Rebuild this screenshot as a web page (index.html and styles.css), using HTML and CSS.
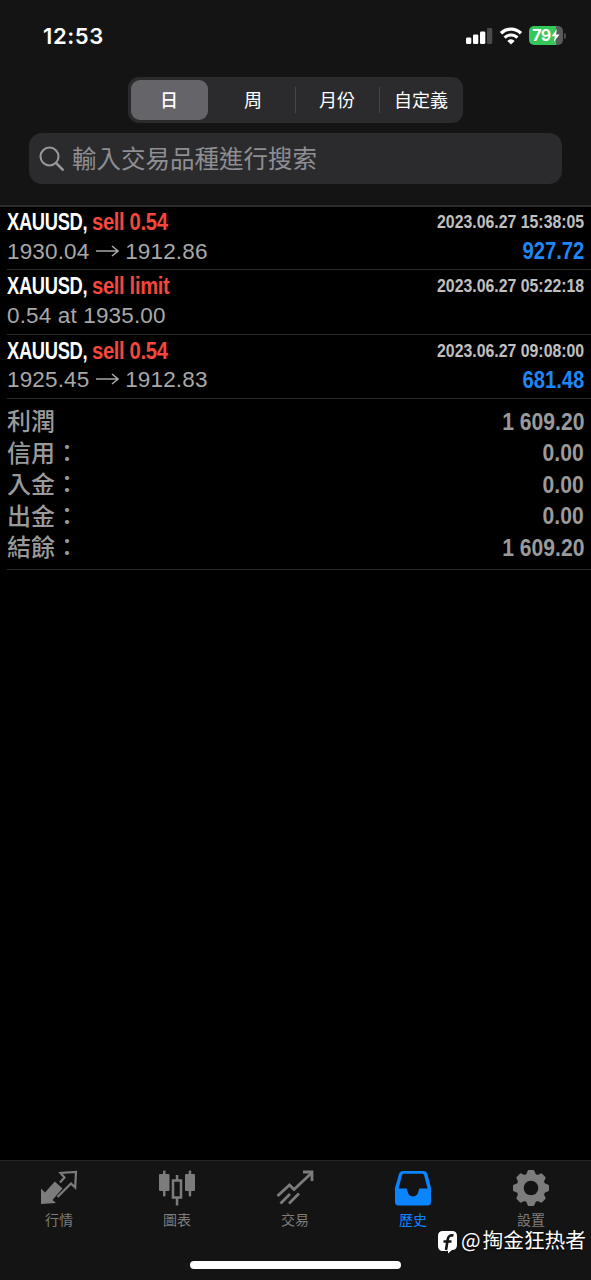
FILE: index.html
```
<!DOCTYPE html>
<html lang="zh-Hant">
<head>
    <meta charset="UTF-8">
    <meta name="viewport" content="width=device-width, initial-scale=1.0">
    <title>歷史</title>
    <link rel="stylesheet" href="styles.css">
</head>
<body>
    <header>
        <div class="status-bar">
            <span class="clock">12:53</span>
            <div class="status-icons">
                <svg class="signal" width="27" height="18" viewBox="0 0 27 18">
                    <rect x="0" y="10.5" width="5.3" height="6.5" rx="1.3" fill="#fff"/>
                    <rect x="7" y="7.5" width="5.3" height="9.5" rx="1.3" fill="#fff"/>
                    <rect x="14" y="4.5" width="5.3" height="12.5" rx="1.3" fill="#fff"/>
                    <rect x="21" y="1" width="5.3" height="16" rx="1.3" fill="#4a4a4a"/>
                </svg>
                <svg class="wifi" width="24" height="18" viewBox="0 0 24 18">
                    <path d="M2 6.300a14 14 0 0 1 20 0" fill="none" stroke="#fff" stroke-width="3.400"/>
                    <path d="M5.600 10.600a9 9 0 0 1 12.800 0" fill="none" stroke="#fff" stroke-width="3"/>
                    <path d="M8.300 13.900a5.200 5.200 0 0 1 7.400 0L12 17.500z" fill="#fff"/>
                </svg>
                <div class="battery">
                    <span>79</span>
                    <svg width="9" height="13" viewBox="0 0 9 13"><path d="M6 0L0.500 7.300h3.300L2.800 13 8.600 5.400H5z" fill="#fff"/></svg>
                </div>
                <i class="battery-cap"></i>
            </div>
        </div>
        <nav class="segments">
            <a class="active">日</a>
            <a>周</a>
            <a>月份</a>
            <a>自定義</a>
        </nav>
        <div class="search">
            <svg width="26" height="26" viewBox="0 0 26 26" fill="none" stroke="#98989d" stroke-width="2.1" stroke-linecap="round">
                <circle cx="10.5" cy="10.5" r="9"/>
                <path d="M17.200 17.200l6.500 6.500" stroke-width="2.600"/>
            </svg>
            <span>輸入交易品種進行搜索</span>
        </div>
    </header>

    <main>
        <ul class="deals">
            <li>
                <div class="line">
                    <b class="symbol"><span>XAUUSD,</span> <em>sell 0.54</em></b>
                    <time>2023.06.27 15:38:05</time>
                </div>
                <div class="line">
                    <span class="price">1930.04 <svg class="arrow" width="23" height="12" viewBox="0 0 23 12"><path d="M0 6h22M16 1l6 5-6 5"/></svg> 1912.86</span>
                    <b class="profit">927.72</b>
                </div>
            </li>
            <li>
                <div class="line">
                    <b class="symbol"><span>XAUUSD,</span> <em>sell limit</em></b>
                    <time>2023.06.27 05:22:18</time>
                </div>
                <div class="line">
                    <span class="price">0.54 at 1935.00</span>
                </div>
            </li>
            <li>
                <div class="line">
                    <b class="symbol"><span>XAUUSD,</span> <em>sell 0.54</em></b>
                    <time>2023.06.27 09:08:00</time>
                </div>
                <div class="line">
                    <span class="price">1925.45 <svg class="arrow" width="23" height="12" viewBox="0 0 23 12"><path d="M0 6h22M16 1l6 5-6 5"/></svg> 1912.83</span>
                    <b class="profit">681.48</b>
                </div>
            </li>
        </ul>
        <dl class="summary">
            <div><dt>利潤</dt><dd>1 609.20</dd></div>
            <div><dt>信用：</dt><dd>0.00</dd></div>
            <div><dt>入金：</dt><dd>0.00</dd></div>
            <div><dt>出金：</dt><dd>0.00</dd></div>
            <div><dt>結餘：</dt><dd>1 609.20</dd></div>
        </dl>
    </main>

    <footer>
        <nav class="tabs">
            <a>
                <svg width="38" height="38" viewBox="0 0 38 38">
                    <path d="M1 19.500l4 4L14.800 12.500l7.700 7L12.500 31l3.500 3-15 1z" fill="currentColor"/>
                    <path d="M20 13.500l4.500-5-4-4.500L36 3l-.8 15.500-4.200-4-13.500 13.500" fill="none" stroke="currentColor" stroke-width="2.200"/>
                </svg>
                <span>行情</span>
            </a>
            <a>
                <svg width="38" height="38" viewBox="0 0 38 38" fill="currentColor">
                    <rect x="1" y="5" width="10.5" height="17" rx="1"/>
                    <rect x="5" y="1.5" width="2.5" height="26" rx="1"/>
                    <rect x="27" y="5" width="10" height="17" rx="1"/>
                    <rect x="30.7" y="1.5" width="2.5" height="26" rx="1"/>
                    <rect x="15" y="11.5" width="8" height="17" fill="none" stroke="currentColor" stroke-width="2.5"/>
                    <rect x="17.8" y="6" width="2.5" height="5"/>
                    <rect x="17.8" y="29" width="2.5" height="7.5"/>
                </svg>
                <span>圖表</span>
            </a>
            <a>
                <svg width="38" height="38" viewBox="0 0 38 38" fill="none" stroke="currentColor" stroke-width="2.8">
                    <path d="M1.500 27l12-11 4.500 4.500L35.500 4"/>
                    <path d="M27 3h9v9"/>
                    <path d="M4.500 34.500l9.500-9.500M13 34.500l10-10"/>
                </svg>
                <span>交易</span>
            </a>
            <a class="active">
                <svg width="38" height="38" viewBox="0 0 38 38">
                    <path fill-rule="evenodd" fill="currentColor" d="M9 2h20.500q3 0 4 3L37 19v14q0 3.500-3.500 3.500h-29Q1 36.500 1 33V19L5 5q1-3 4-3zM9.800 4.800q-1.500 0-2 1.700L4.700 19.500h7.500q1 0 1 1.500 1 6.500 5.800 6.500t5.800-6.500q0-1.500 1-1.500h7.800L30.200 6.500q-.5-1.700-2-1.700z"/>
                </svg>
                <span>歷史</span>
            </a>
            <a>
                <svg width="38" height="38" viewBox="-19 -19 38 38">
                    <g fill="currentColor">
                        <g id="teeth">
                            <path id="tooth" d="M-5-13L-3.300-17.200q.3-.8 1-.8h4.600q.7 0 1 .8L5-13V13L3.300 17.200q-.3.8-1 .8h-4.600q-.7 0-1-.8L-5 13z"/>
                            <use href="#tooth" transform="rotate(90)"/>
                        </g>
                        <use href="#teeth" transform="rotate(45)"/>
                        <circle r="14.5"/>
                    </g>
                    <circle r="7.3" fill="#141414"/>
                </svg>
                <span>設置</span>
            </a>
        </nav>
        <div class="home-indicator"></div>
        <div class="watermark">
            <svg width="21" height="24" viewBox="0 0 21 24">
                <path d="M6 1h9q5 0 5 5v9q0 5-5 5l-4 3.500V21H6q-5 0-5-5V6q0-5 5-5z" fill="#fff"/>
                <path d="M16.500 5.500q-5-1-5.800 4L9 20M6.500 11.500h8" fill="none" stroke="#141414" stroke-width="2.600"/>
            </svg>
            <span>@</span><span>掏金狂热者</span>
        </div>
    </footer>
</body>
</html>
```
FILE: styles.css
```
* {
    box-sizing: border-box;
}
body {
    font-family: "Liberation Sans", "Noto Sans CJK TC", sans-serif;
    margin: 0;
    height: 1280px;
    display: flex;
    flex-direction: column;
    background-color: #000;
    color: #fff;
}
header {
    height: 207px;
    background-color: #141414;
    border-bottom: 2px solid #2c2c2c;
}
.status-bar {
    height: 77px;
    padding: 22px 25px 0 43px;
    display: flex;
    justify-content: space-between;
    align-items: flex-start;
}
.clock {
    font-family: Inter, sans-serif;
    font-size: 22px;
    font-weight: 600;
    line-height: 28px;
    letter-spacing: 0.6px;
}
.status-icons {
    display: flex;
    align-items: center;
    margin-top: 4px;
}
.wifi {
    margin: 0 6px 0 6px;
}
.battery {
    width: 34px;
    height: 19px;
    border-radius: 5px;
    background: linear-gradient(90deg, #34c759 79%, #5a5a5a 79%);
    display: flex;
    align-items: center;
    justify-content: center;
    font-family: Inter, sans-serif;
    font-weight: 700;
    font-size: 16px;
    line-height: 19px;
    letter-spacing: -0.5px;
}
.battery-cap {
    width: 2px;
    height: 6px;
    margin-left: 1px;
    border-radius: 0 2px 2px 0;
    background: #4a4a4a;
}
.segments {
    width: 335px;
    height: 46px;
    margin: 0 auto;
    padding: 3px;
    display: flex;
    border-radius: 11px;
    background: #2b2b2d;
    font-family: "Noto Sans CJK TC", sans-serif;
    font-size: 18px;
    line-height: 38px;
    text-align: center;
}
.segments a {
    flex: 0 0 84px;
}
.segments a.active {
    flex: 0 0 77px;
    height: 40px;
    margin-right: 3px;
    padding-right: 1px;
    border-radius: 9px;
    background: #656469;
    font-weight: 500;
}
.segments a + a + a {
    background: linear-gradient(#47474a, #47474a) no-repeat 0 7px / 1px 26px;
}
.search {
    height: 51px;
    margin: 10px 29px 0;
    padding: 0 10px;
    display: flex;
    align-items: center;
    gap: 7px;
    border-radius: 13px;
    background: #2b2b2d;
    color: #8e8e93;
    font-family: "Noto Sans CJK TC", sans-serif;
    font-size: 24.5px;
    line-height: 49px;
}
.search span {
    height: 51px;
}
main {
    flex: 1;
}
.deals {
    list-style: none;
    margin: 0 0 0 7px;
    padding: 0;
}
.deals li {
    height: 64.3px;
    padding: 2px 7px 0 0;
    border-bottom: 1px solid #2a2a2a;
}
.deals li:first-child {
    height: 63.3px;
    padding-top: 1px;
}
.line {
    height: 29px;
    display: flex;
    justify-content: space-between;
    align-items: center;
    white-space: nowrap;
}
.symbol {
    display: flex;
    font-size: 23.5px;
    letter-spacing: -0.4px;
}
.symbol span {
    width: 84.5px;
    transform: scaleX(0.78);
    transform-origin: left;
}
.symbol em {
    font-style: normal;
    color: #f5473e;
    transform: scaleX(0.86);
    transform-origin: left;
}
time, .profit, dd {
    font-weight: bold;
    transform: scaleX(0.88);
    transform-origin: right;
}
time {
    font-size: 18px;
    color: #c0c0c0;
}
.price {
    font-size: 22.5px;
    letter-spacing: 0.15px;
    color: #a8a8a8;
}
.arrow {
    fill: none;
    stroke: #a8a8a8;
    stroke-width: 1.5;
    vertical-align: 2px;
}
.profit {
    font-size: 23px;
    color: #1f86f5;
}
.summary {
    margin: 0 0 0 7px;
    padding: 7px 7px 6px 0;
    border-bottom: 1px solid #2a2a2a;
}
.summary div {
    height: 31.5px;
    display: flex;
    justify-content: space-between;
    align-items: center;
    color: #9a9a9a;
}
dt {
    font-family: "Noto Sans CJK TC", sans-serif;
    font-weight: 500;
    font-size: 24px;
    line-height: 26px;
    margin-bottom: 3px;
}
dd {
    margin: 0;
    font-size: 24px;
}
footer {
    position: relative;
    height: 120px;
    background: #141414;
    border-top: 1px solid #262626;
}
.tabs {
    display: flex;
    padding-top: 8px;
    margin-right: 1px;
}
.tabs a {
    flex: 1;
    display: flex;
    flex-direction: column;
    align-items: center;
    color: #7c7c7c;
    font-family: "Noto Sans CJK TC", sans-serif;
    font-size: 14px;
    line-height: 20px;
}
.tabs a span {
    margin-top: 2px;
}
.tabs a.active {
    color: #0a84ff;
}
.home-indicator {
    width: 211px;
    height: 8px;
    margin: 32px auto 0;
    border-radius: 4px;
    background: #fff;
}
.watermark {
    position: absolute;
    right: 5px;
    top: 63px;
    display: flex;
    align-items: center;
    font-family: "Noto Sans CJK SC", sans-serif;
    font-size: 20.7px;
    line-height: 30px;
    text-shadow: 0 1px 2px #000;
}
.watermark svg {
    margin: 6px 3px 0 0;
}
.watermark span + span {
    margin-left: 2px;
}
```
